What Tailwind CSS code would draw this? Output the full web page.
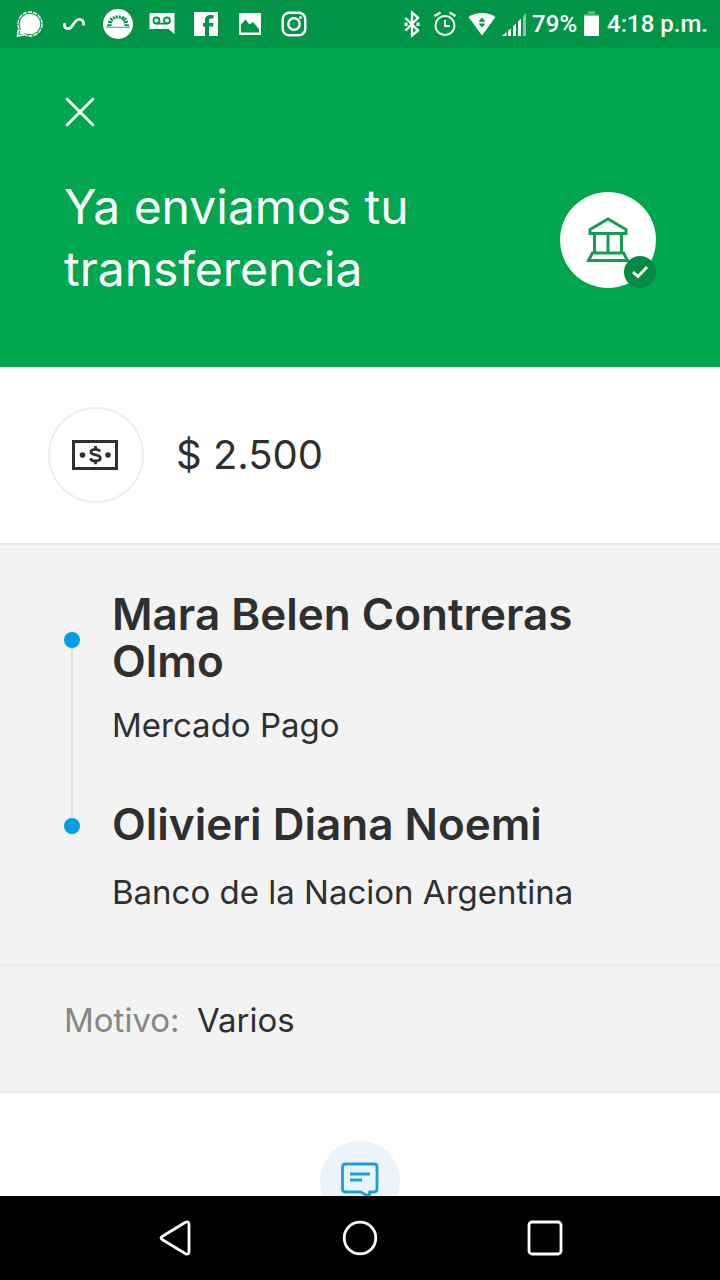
<!DOCTYPE html>
<html lang="es">
  <head>
    <meta charset="UTF-8" />
    <meta name="viewport" content="width=device-width, initial-scale=1.0" />
    <script src="https://cdn.jsdelivr.net/npm/@tailwindcss/browser@4"></script>
    <title>Ya enviamos tu transferencia</title>
  </head>

  <body
    class="flex flex-col h-screen overflow-hidden bg-white text-[#2f2f2f] font-['Inter',sans-serif]"
  >
    <!-- status bar -->
    <div
      class="flex justify-between items-center shrink-0 h-12 pl-2 pr-3 bg-[#029548] text-white"
    >
      <div class="flex">
        <svg class="w-11 h-12" viewBox="0 0 44 48" fill="none">
          <circle cx="22" cy="24" r="10.3" fill="#fff" />
          <circle cx="22" cy="24" r="12" stroke="#fff" stroke-width="1.5" stroke-dasharray="4.2 1.2" />
          <path d="M10.500 29.500L9.500 36L16 35" stroke="#fff" stroke-width="1.600" />
          <path d="M13 28L11.500 34.500L18 33Z" fill="#fff" />
        </svg>
        <svg class="w-11 h-12" viewBox="0 0 44 48" fill="none">
          <path
            d="M12.500 24C12 27.500 14 29 17 28.500C21 27.800 22 19.500 27 19.300C30.500 19.200 32 21.500 31.500 24.500"
            stroke="#fff"
            stroke-width="2.700"
            stroke-linecap="round"
          />
        </svg>
        <svg class="w-11 h-12" viewBox="0 0 44 48" fill="none">
          <circle cx="22" cy="24" r="15" fill="#fff" />
          <path
            d="M15.500 25L11 25.500M16 22.500L12 21.500M17 20.700L14 18M19 19L17 16.500M21 18.500L20.500 15.500M23.500 18.500L24 15.500M25.500 19.200L28 16.500M27 20.700L30.500 18M28 22.500L32 21.500M28.500 25L33 25.500"
            stroke="#029548"
            stroke-width="2"
          />
          <path d="M10 27.300H34" stroke="#029548" stroke-width="0.800" />
        </svg>
        <svg class="w-11 h-12" viewBox="0 0 44 48" fill="none">
          <path d="M9.500 13H34.500V34L28.500 29H9.500Z" fill="#fff" />
          <circle cx="16.500" cy="20.500" r="3" stroke="#029548" stroke-width="1.800" />
          <circle cx="27" cy="20.500" r="3" stroke="#029548" stroke-width="1.800" />
          <path d="M16.500 23.600H27" stroke="#029548" stroke-width="1.800" />
        </svg>
        <svg class="w-11 h-12" viewBox="0 0 44 48" fill="none">
          <path d="M10 12H34V36H10Z" fill="#fff" />
          <path
            d="M25 36V26.500H29L29.500 23H25V20.800C25 19.200 25.700 18.400 27.300 18.400H29.500V15H26.500C23 15 21 17 21 20V23H19V26.500H21V36Z"
            fill="#029548"
          />
        </svg>
        <svg class="w-11 h-12" viewBox="0 0 44 48" fill="none">
          <rect x="11" y="13" width="22" height="22" rx="1" fill="#fff" />
          <path
            d="M13 32.500V24.500L17.500 19.500L21.500 24.500L25 22L31 29V32.500Z"
            fill="#029548"
          />
        </svg>
        <svg class="w-11 h-12" viewBox="0 0 44 48" fill="none" stroke="#fff" stroke-width="2.400">
          <rect x="10.700" y="12.700" width="22.600" height="22.600" rx="6.500" />
          <circle cx="22" cy="24" r="5.700" />
          <circle cx="28.500" cy="17.500" r="1.500" fill="#fff" stroke="none" />
        </svg>
      </div>
      <div class="flex items-center gap-[6px] font-['Roboto',sans-serif] font-medium text-2xl">
        <svg class="w-6 h-12" viewBox="0 0 24 48" fill="none">
          <path
            d="M3.500 18L16 30.500L10 35.500V12.500L16 17.800L3.500 30.500"
            stroke="#fff"
            stroke-width="2.300"
          />
          <path d="M2.500 22.500H5.500V26H2.500ZM14.500 22.500H17.500V26H14.500Z" fill="#fff" />
        </svg>
        <svg class="w-7 h-12" viewBox="0 0 28 48" fill="none" stroke="#fff">
          <circle cx="13" cy="25.500" r="9.500" stroke-width="2" />
          <path d="M13 20V26H18" stroke-width="2" />
          <path d="M2.500 16L8.500 12.500M17.500 12.500L23.500 16" stroke-width="2.200" />
        </svg>
        <svg class="w-[30px] h-12" viewBox="0 0 30 48" fill="none">
          <path
            d="M2.500 17C10 11.500 22 11.500 29.500 17L16 35.500Z"
            fill="#fff"
          />
          <path d="M16 17.500L19.500 21.700H12.500ZM16 27.500L19.500 23.500H12.500Z" fill="#029548" />
        </svg>
        <svg class="w-6 h-12" viewBox="0 0 24 48" fill="#fff">
          <path d="M0 36L4.500 32V36ZM6 31L9 28.500V36H6ZM11 26.500L14 23.500V36H11ZM16 21.500L19 18.500V36H16Z" />
          <path d="M21 16.500L24 13V36H21Z" opacity="0.500" />
        </svg>
        <span>79%</span>
        <svg class="w-[18px] h-12" viewBox="0 0 18 48" fill="#fff">
          <path d="M5 11.500H12V13.500H5Z" opacity="0.500" />
          <path d="M1 14.500H16V16H1Z" opacity="0.500" />
          <rect x="1" y="16" width="15" height="20" rx="1" />
        </svg>
        <span>4:18 p.m.</span>
      </div>
    </div>

    <main class="flex flex-col flex-1 min-h-0 overflow-hidden">
      <header class="shrink-0 px-16 pt-12 pb-[67px] bg-[#02a650] text-white">
        <button type="button" aria-label="Cerrar" class="block w-8 h-8">
          <svg class="w-8 h-8" viewBox="0 0 32 32" fill="none">
            <path
              d="M3 3L29 29M29 3L3 29"
              stroke="#fff"
              stroke-width="2.800"
              stroke-linecap="round"
            />
          </svg>
        </button>
        <div class="flex justify-between items-center mt-12">
          <h1 class="w-96 text-5xl leading-[62px] font-normal">
            Ya enviamos tu transferencia
          </h1>
          <div class="relative w-24 h-24 mt-1 rounded-full bg-white">
            <svg class="w-24 h-24" viewBox="0 0 96 96" fill="none" stroke="#159c55" stroke-width="3">
              <path d="M30 41.500V37.500L48 27L66 37.500V41.500Z" />
              <path d="M34.500 42V60M61.500 42V60M48 42V60" />
              <path d="M32.500 61H63.500L67.500 68.500H28.500Z" />
            </svg>
            <div class="absolute right-0 bottom-0 w-8 h-8 rounded-full bg-[#078a46]">
              <svg class="w-8 h-8" viewBox="0 0 32 32" fill="none">
                <path d="M9 16L14 20.500L23 11" stroke="#fff" stroke-width="2.800" />
              </svg>
            </div>
          </div>
        </div>
      </header>

      <section class="flex items-center shrink-0 gap-8 px-12 py-10">
        <div
          class="flex justify-center items-center w-24 h-24 rounded-full border-2 border-[#ededed]"
        >
          <svg class="w-12 h-8" viewBox="0 0 48 32" fill="none">
            <rect x="1.500" y="2.500" width="43" height="27" stroke="#2f2f2f" stroke-width="3" />
            <circle cx="10.500" cy="16" r="2.800" fill="#2f2f2f" />
            <circle cx="36" cy="16" r="2.800" fill="#2f2f2f" />
            <path
              d="M28 12.500C27 10.700 25.500 10.300 23.500 10.300C21 10.300 19 11.300 19 13C19 17 28.300 14.700 28.300 19C28.300 21 26.300 22 23.500 22C21 22 19.200 21.200 18.300 19.300M23.500 7V10.500M23.500 22V25.300"
              stroke="#2f2f2f"
              stroke-width="2.800"
            />
          </svg>
        </div>
        <p class="text-[40px] leading-[48px]">$ 2.500</p>
      </section>

      <section
        class="flex shrink-0 gap-8 px-16 pt-[46px] pb-[52px] border-t-2 border-[#e9e9e9] bg-[#f3f3f3]"
      >
        <div class="flex flex-col items-center w-4 pt-[41px] pb-[78px]">
          <span class="w-4 h-4 rounded-full bg-[#009ee3]"></span>
          <span class="flex-1 w-0.5 bg-[#dcdcdc]"></span>
          <span class="w-4 h-4 rounded-full bg-[#009ee3]"></span>
        </div>
        <div class="flex-1">
          <h2 class="text-[44px] leading-[47px] font-semibold">
            Mara Belen Contreras Olmo
          </h2>
          <p class="mt-5 text-[33px] leading-[40px]">Mercado Pago</p>
          <h2 class="mt-14 text-[44px] leading-[47px] font-semibold">
            Olivieri Diana Noemi
          </h2>
          <p class="mt-6 text-[33px] leading-[40px]">Banco de la Nacion Argentina</p>
        </div>
      </section>

      <section
        class="shrink-0 px-16 pt-[34px] pb-[51px] border-y-2 border-[#e9e9e9] bg-[#f3f3f3]"
      >
        <p class="text-[33px] leading-[40px]">
          <span class="mr-2 text-[#868686]">Motivo:</span>
          Varios
        </p>
      </section>

      <section class="flex justify-center pt-12">
        <button
          type="button"
          aria-label="Comentario"
          class="flex justify-center shrink-0 w-20 h-20 pt-5 rounded-full bg-[#ecf4fb]"
        >
          <svg class="w-10 h-10" viewBox="0 0 40 40" fill="none" stroke="#1b9fdb" stroke-width="2.800">
            <path
              d="M5.500 3H34Q37 3 37 6V28Q37 31 34 31H29.500V35.500L20.500 31H5.500Q2.500 31 2.500 28V6Q2.500 3 5.500 3Z"
              stroke-linejoin="round"
            />
            <path d="M10 13H30M10 19H22" />
          </svg>
        </button>
      </section>
    </main>

    <!-- android navigation -->
    <nav class="flex justify-center items-center shrink-0 gap-[145px] h-[84px] bg-black">
      <button type="button" aria-label="Atrás" class="w-10 h-10">
        <svg class="w-10 h-10" viewBox="0 0 40 40" fill="none">
          <path
            d="M7.500 18.200L30.500 4.300Q34 2.800 34 6.500V33.500Q34 37.200 30.500 35.700L7.500 21.800Q4.500 20 7.500 18.200Z"
            stroke="#fff"
            stroke-width="2.800"
          />
        </svg>
      </button>
      <button type="button" aria-label="Inicio" class="w-10 h-10">
        <svg class="w-10 h-10" viewBox="0 0 40 40" fill="none">
          <circle cx="20" cy="20" r="15.800" stroke="#fff" stroke-width="2.800" />
        </svg>
      </button>
      <button type="button" aria-label="Recientes" class="w-10 h-10">
        <svg class="w-10 h-10" viewBox="0 0 40 40" fill="none">
          <rect x="4" y="4" width="32" height="32" rx="3" stroke="#fff" stroke-width="2.800" />
        </svg>
      </button>
    </nav>
  </body>
</html>
